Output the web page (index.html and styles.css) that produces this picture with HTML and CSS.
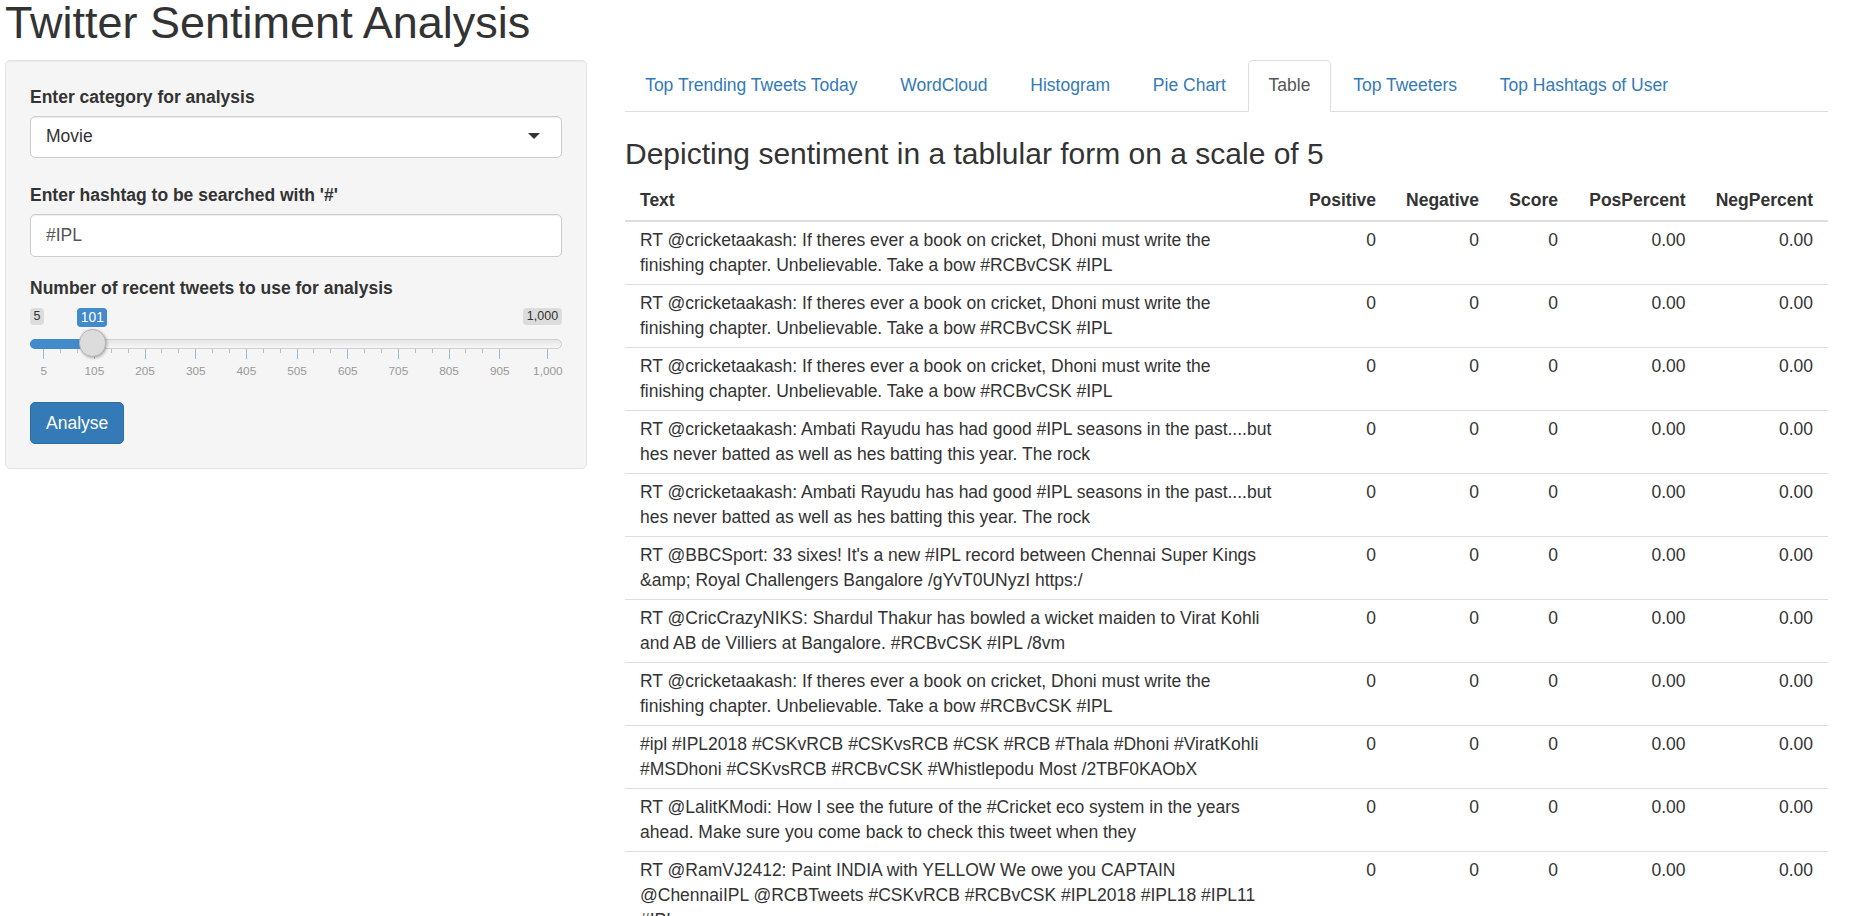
FILE: index.html
```html
<!DOCTYPE html>
<html>
<head>
<meta charset="utf-8">
<title>Twitter Sentiment Analysis</title>
<link rel="stylesheet" href="styles.css">
</head>
<body>
<div class="page">
  <h2 class="title">Twitter Sentiment Analysis</h2>
  <div class="layout">
    <aside class="sidebar">
      <div class="well">
        <div class="form-group select-group">
          <label class="control-label">Enter category for analysis</label>
          <div class="select-box">Movie<span class="caret"></span></div>
        </div>
        <div class="form-group">
          <label class="control-label">Enter hashtag to be searched with '#'</label>
          <input class="text-input" type="text" value="#IPL">
        </div>
        <div class="form-group">
          <label class="control-label">Number of recent tweets to use for analysis</label>
          <div class="slider">
            <span class="irs-min">5</span>
            <span class="irs-max">1,000</span>
            <span class="irs-line"></span>
            <span class="irs-bar"></span>
            <span class="irs-single">101</span>
            <span class="irs-handle"></span>
            <span class="grid-pol" style="left:13.75px"></span>
            <span class="grid-pol small" style="left:30.64px"></span>
            <span class="grid-pol small" style="left:47.53px"></span>
            <span class="grid-pol" style="left:64.41px"></span>
            <span class="grid-pol small" style="left:81.30px"></span>
            <span class="grid-pol small" style="left:98.19px"></span>
            <span class="grid-pol" style="left:115.08px"></span>
            <span class="grid-pol small" style="left:131.97px"></span>
            <span class="grid-pol small" style="left:148.86px"></span>
            <span class="grid-pol" style="left:165.74px"></span>
            <span class="grid-pol small" style="left:182.63px"></span>
            <span class="grid-pol small" style="left:199.52px"></span>
            <span class="grid-pol" style="left:216.40px"></span>
            <span class="grid-pol small" style="left:233.29px"></span>
            <span class="grid-pol small" style="left:250.18px"></span>
            <span class="grid-pol" style="left:267.07px"></span>
            <span class="grid-pol small" style="left:283.96px"></span>
            <span class="grid-pol small" style="left:300.85px"></span>
            <span class="grid-pol" style="left:317.73px"></span>
            <span class="grid-pol small" style="left:334.62px"></span>
            <span class="grid-pol small" style="left:351.51px"></span>
            <span class="grid-pol" style="left:368.39px"></span>
            <span class="grid-pol small" style="left:385.28px"></span>
            <span class="grid-pol small" style="left:402.17px"></span>
            <span class="grid-pol" style="left:419.06px"></span>
            <span class="grid-pol small" style="left:435.95px"></span>
            <span class="grid-pol small" style="left:452.84px"></span>
            <span class="grid-pol" style="left:469.72px"></span>
            <span class="grid-pol" style="left:517.85px"></span>
            <span class="grid-text" style="left:13.75px">5</span>
            <span class="grid-text" style="left:64.41px">105</span>
            <span class="grid-text" style="left:115.08px">205</span>
            <span class="grid-text" style="left:165.74px">305</span>
            <span class="grid-text" style="left:216.40px">405</span>
            <span class="grid-text" style="left:267.07px">505</span>
            <span class="grid-text" style="left:317.73px">605</span>
            <span class="grid-text" style="left:368.39px">705</span>
            <span class="grid-text" style="left:419.06px">805</span>
            <span class="grid-text" style="left:469.72px">905</span>
            <span class="grid-text" style="left:517.85px">1,000</span>
          </div>
        </div>
        <div class="form-group last">
          <button class="btn" type="button">Analyse</button>
        </div>
      </div>
    </aside>
    <main class="main">
      <ul class="nav-tabs">
        <li><a href="#">Top Trending Tweets Today</a></li>
        <li><a href="#">WordCloud</a></li>
        <li><a href="#">Histogram</a></li>
        <li><a href="#">Pie Chart</a></li>
        <li class="active"><a href="#">Table</a></li>
        <li><a href="#">Top Tweeters</a></li>
        <li><a href="#">Top Hashtags of User</a></li>
      </ul>
      <h3 class="heading">Depicting sentiment in a tablular form on a scale of 5</h3>
      <table class="data-table">
        <colgroup>
          <col>
          <col class="c-pos">
          <col class="c-neg">
          <col class="c-score">
          <col class="c-pp">
          <col class="c-np">
        </colgroup>
        <thead>
          <tr><th class="text-col">Text</th><th>Positive</th><th>Negative</th><th>Score</th><th>PosPercent</th><th>NegPercent</th></tr>
        </thead>
        <tbody>
          <tr><td class="text-cell">RT @cricketaakash: If theres ever a book on cricket, Dhoni must write the finishing chapter. Unbelievable. Take a bow #RCBvCSK #IPL</td><td>0</td><td>0</td><td>0</td><td>0.00</td><td>0.00</td></tr>
          <tr><td class="text-cell">RT @cricketaakash: If theres ever a book on cricket, Dhoni must write the finishing chapter. Unbelievable. Take a bow #RCBvCSK #IPL</td><td>0</td><td>0</td><td>0</td><td>0.00</td><td>0.00</td></tr>
          <tr><td class="text-cell">RT @cricketaakash: If theres ever a book on cricket, Dhoni must write the finishing chapter. Unbelievable. Take a bow #RCBvCSK #IPL</td><td>0</td><td>0</td><td>0</td><td>0.00</td><td>0.00</td></tr>
          <tr><td class="text-cell">RT @cricketaakash: Ambati Rayudu has had good #IPL seasons in the past....but hes never batted as well as hes batting this year. The rock</td><td>0</td><td>0</td><td>0</td><td>0.00</td><td>0.00</td></tr>
          <tr><td class="text-cell">RT @cricketaakash: Ambati Rayudu has had good #IPL seasons in the past....but hes never batted as well as hes batting this year. The rock</td><td>0</td><td>0</td><td>0</td><td>0.00</td><td>0.00</td></tr>
          <tr><td class="text-cell">RT @BBCSport: 33 sixes! It's a new #IPL record between Chennai Super Kings &amp;amp; Royal Challengers Bangalore /gYvT0UNyzI https:/</td><td>0</td><td>0</td><td>0</td><td>0.00</td><td>0.00</td></tr>
          <tr><td class="text-cell">RT @CricCrazyNIKS: Shardul Thakur has bowled a wicket maiden to Virat Kohli and AB de Villiers at Bangalore. #RCBvCSK #IPL /8vm</td><td>0</td><td>0</td><td>0</td><td>0.00</td><td>0.00</td></tr>
          <tr><td class="text-cell">RT @cricketaakash: If theres ever a book on cricket, Dhoni must write the finishing chapter. Unbelievable. Take a bow #RCBvCSK #IPL</td><td>0</td><td>0</td><td>0</td><td>0.00</td><td>0.00</td></tr>
          <tr><td class="text-cell">#ipl #IPL2018 #CSKvRCB #CSKvsRCB #CSK #RCB #Thala #Dhoni #ViratKohli #MSDhoni #CSKvsRCB #RCBvCSK #Whistlepodu Most /2TBF0KAObX</td><td>0</td><td>0</td><td>0</td><td>0.00</td><td>0.00</td></tr>
          <tr><td class="text-cell">RT @LalitKModi: How I see the future of the #Cricket eco system in the years ahead. Make sure you come back to check this tweet when they</td><td>0</td><td>0</td><td>0</td><td>0.00</td><td>0.00</td></tr>
          <tr><td class="text-cell">RT @RamVJ2412: Paint INDIA with YELLOW We owe you CAPTAIN @ChennaiIPL @RCBTweets #CSKvRCB #RCBvCSK #IPL2018 #IPL18 #IPL11 #IPL</td><td>0</td><td>0</td><td>0</td><td>0.00</td><td>0.00</td></tr>
        </tbody>
      </table>
    </main>
  </div>
</div>
</body>
</html>
```

FILE: styles.css
```css
* {
  box-sizing: border-box;
}

html {
  overflow: hidden;
}

body {
  margin: 0;
  font-family: "Liberation Sans", Arial, Helvetica, sans-serif;
  font-size: 17.5px;
  line-height: 25px;
  color: #333;
  background: #fff;
}

.page {
  padding-left: 5px;
  padding-right: 30px;
}

.title {
  font-size: 45px;
  font-weight: normal;
  line-height: 49.5px;
  margin: -2px 0 12.5px;
}

.layout {
  display: grid;
  grid-template-columns: 581.6px 1fr;
  column-gap: 38.4px;
  align-items: start;
}

/* sidebar */
.well {
  background: #f5f5f5;
  border: 1px solid #e3e3e3;
  border-radius: 5px;
  padding: 24px;
  box-shadow: inset 0 1px 1px rgba(0, 0, 0, 0.05);
}

.form-group {
  margin-bottom: 18.75px;
}

.form-group.select-group {
  margin-bottom: 25.5px;
}

.form-group.last {
  margin-bottom: 0;
}

.control-label {
  display: block;
  font-weight: bold;
  margin-bottom: 6.25px;
}

.select-box {
  position: relative;
  height: 41.25px;
  border: 1px solid #ccc;
  border-radius: 5px;
  background: #fff;
  padding: 0 15px;
  display: flex;
  align-items: center;
  color: #333;
  box-shadow: inset 0 1px 1px rgba(0, 0, 0, 0.075);
}

.caret {
  position: absolute;
  right: 21px;
  top: 50%;
  margin-top: -4px;
  width: 0;
  height: 0;
  border-style: solid;
  border-width: 6px 6px 0 6px;
  border-color: #333 transparent transparent transparent;
}

.text-input {
  display: block;
  width: 100%;
  height: 42.5px;
  padding: 0 15px;
  margin: 0;
  font-family: inherit;
  font-size: 17.5px;
  color: #555;
  border: 1px solid #ccc;
  border-radius: 5px;
  background: #fff;
  box-shadow: inset 0 1px 1px rgba(0, 0, 0, 0.075);
  outline: none;
}

/* range slider */
.slider {
  position: relative;
  height: 76.5px;
}

.irs-min,
.irs-max {
  position: absolute;
  top: 1px;
  font-size: 12.5px;
  line-height: 15.5px;
  padding: 1px 3.5px;
  background: rgba(0, 0, 0, 0.1);
  border-radius: 3.75px;
  color: #333;
}

.irs-min {
  left: 0;
}

.irs-max {
  right: 0;
}

.irs-single {
  position: absolute;
  top: 1px;
  left: 62.35px;
  transform: translateX(-50%);
  font-size: 13.75px;
  line-height: 17.5px;
  padding: 1px 3.5px;
  background: #428bca;
  color: #fff;
  border-radius: 3.75px;
}

.irs-line {
  position: absolute;
  left: 0;
  right: 0;
  top: 32px;
  height: 10px;
  border: 1px solid #cfcfcf;
  border-radius: 10px;
  background: linear-gradient(to bottom, #ddd -50%, #fff 150%);
}

.irs-bar {
  position: absolute;
  left: 0;
  width: 62.35px;
  top: 32px;
  height: 10px;
  background: #428bca;
  border-radius: 5px 0 0 5px;
}

.irs-handle {
  position: absolute;
  left: 48.6px;
  top: 22.3px;
  width: 27.5px;
  height: 27.5px;
  border-radius: 50%;
  background: #dcdcdc;
  border: 1px solid #b4b4b4;
  box-shadow: 1px 1px 3px rgba(0, 0, 0, 0.3);
  z-index: 2;
}

.grid-pol {
  position: absolute;
  top: 42px;
  width: 1px;
  height: 10px;
  margin-left: -0.5px;
  background: #94bbe0;
}

.grid-pol.small {
  height: 4.5px;
  background: #bdbdbd;
}

.grid-text {
  position: absolute;
  top: 57px;
  font-size: 11.8px;
  line-height: 14px;
  color: #999;
  white-space: nowrap;
  transform: translateX(-50%);
}

.btn {
  display: inline-block;
  font-family: inherit;
  font-size: 17.5px;
  line-height: 25px;
  padding: 7.5px 15px;
  color: #fff;
  background: #337ab7;
  border: 1px solid #2e6da4;
  border-radius: 5px;
  cursor: pointer;
}

/* main panel */
.nav-tabs {
  display: flex;
  list-style: none;
  margin: 0;
  padding: 0;
  border-bottom: 1px solid #ddd;
}

.nav-tabs li {
  margin-bottom: -1px;
}

.nav-tabs a {
  display: block;
  padding: 12px 19.15px 13px;
  margin-right: 2.5px;
  border: 1px solid transparent;
  border-radius: 5px 5px 0 0;
  color: #337ab7;
  text-decoration: none;
  line-height: 25px;
}

.nav-tabs li.active a {
  color: #555;
  background: #fff;
  border-color: #ddd #ddd transparent;
}

.heading {
  font-size: 30px;
  font-weight: normal;
  line-height: 33px;
  margin: 24.5px 0 12.5px;
}

.data-table {
  width: 100%;
  table-layout: fixed;
  border-collapse: separate;
  border-spacing: 0;
}

.c-pos { width: 99px; }
.c-neg { width: 103px; }
.c-score { width: 79px; }
.c-pp { width: 127.5px; }
.c-np { width: 127.5px; }

.data-table th {
  font-weight: bold;
  padding: 6px 15px 7px;
  border-bottom: 2px solid #ddd;
  text-align: right;
  white-space: nowrap;
}

.data-table th.text-col {
  text-align: left;
}

.data-table td {
  padding: 6px 15px;
  border-top: 1px solid #ddd;
  text-align: right;
  vertical-align: top;
}

.data-table td.text-cell {
  text-align: left;
}

.data-table tbody tr:first-child td {
  border-top: 0;
}
```
